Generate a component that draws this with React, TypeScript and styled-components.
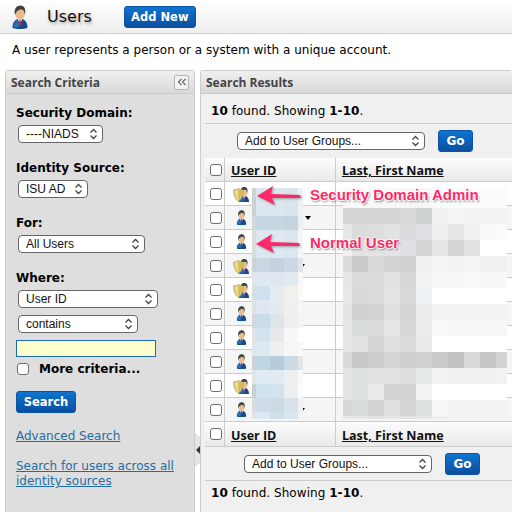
import React from "react";
import styled, { createGlobalStyle } from "styled-components";

const GlobalStyle = createGlobalStyle`
  html, body {
    margin: 0;
    height: 512px;
    overflow: hidden;
    background: #fff;
    color: #000;
    font-family: "DejaVu Sans", Verdana, sans-serif;
  }
`;

const chevrons = encodeURIComponent(
  `<svg xmlns="http://www.w3.org/2000/svg" width="9" height="12" viewBox="0 0 9 12"><path d="M1.5 4.5 4.5 1.5 7.5 4.5M1.5 7.5 4.5 10.5 7.5 7.5" fill="none" stroke="#444" stroke-width="1.3"/></svg>`
);

const Page = styled.div`
  width: 512px;
  height: 512px;
  overflow: hidden;
  display: flex;
  flex-direction: column;
`;

const Header = styled.header`
  height: 34px;
  flex: none;
  box-sizing: border-box;
  display: flex;
  align-items: center;
  padding-left: 12px;
  background: linear-gradient(#fff, #eeeeee);
  border-bottom: 1px solid #cfcfcf;
`;

const Title = styled.h1`
  margin: 0 32px 0 19px;
  font-size: 16px;
  font-weight: normal;
  color: #111;
  text-shadow: 1px 2px 3px rgba(0, 0, 0, 0.35);
`;

const BlueButton = styled.button<{ $w: number; $fs?: number; $mt?: number }>`
  display: block;
  width: ${({ $w }) => $w}px;
  height: 22px;
  padding: 0;
  margin-top: ${({ $mt }) => $mt ?? 0}px;
  border: 1px solid #0a55a5;
  border-radius: 3px;
  background: linear-gradient(#0f74cf, #0a4f9f);
  color: #fff;
  font-family: "DejaVu Sans", sans-serif;
  font-size: ${({ $fs }) => $fs ?? 12}px;
  font-weight: bold;
`;

const Description = styled.p`
  margin: 0;
  height: 36px;
  flex: none;
  padding: 8px 0 0 12px;
  box-sizing: border-box;
  font-size: 12px;
  line-height: 16px;
  letter-spacing: 0.03px;
`;

const Columns = styled.div`
  flex: 1;
  display: flex;
  gap: 5px;
  padding-left: 5px;
  min-height: 0;
`;

const Panel = styled.section<{ $bg: string }>`
  position: relative;
  box-sizing: border-box;
  border: 1px solid #cccccc;
  border-bottom: 0;
  border-radius: 3px 3px 0 0;
  background: ${({ $bg }) => $bg};
`;

const SidePanel = styled(Panel)`
  width: 190px;
  flex: none;
`;

const ResultsPanel = styled(Panel)`
  flex: 1;
  min-width: 0;
  border-right: 0;
`;

const PanelHead = styled.div`
  height: 23px;
  box-sizing: border-box;
  display: flex;
  align-items: center;
  justify-content: space-between;
  padding: 0 5px 0 5px;
  background: linear-gradient(#f0f0f0, #d9d9d9);
  border-bottom: 1px solid #cccccc;
  font-family: "Open Sans", sans-serif;
  font-size: 12px;
  font-weight: bold;
  color: #444;
`;

const CollapseButton = styled.div`
  width: 15px;
  height: 15px;
  box-sizing: border-box;
  border: 1px solid #b5b5b5;
  border-radius: 2px;
  background: #f2f2f2;
  display: flex;
  align-items: center;
  justify-content: center;
`;

const Criteria = styled.div`
  padding: 11px 0 0 10px;
`;

const FieldLabel = styled.div`
  font-size: 12px;
  font-weight: bold;
  line-height: 16px;
  margin-bottom: 4px;
`;

const Field = styled.div`
  height: 55px;
`;

const Select = styled.select<{ $w: number }>`
  display: block;
  appearance: none;
  width: ${({ $w }) => $w}px;
  height: 18px;
  margin: 0 0 7px 2px;
  padding: 0 0 0 7px;
  box-sizing: border-box;
  border: 1px solid #666;
  border-radius: 4px;
  background: #fff url("data:image/svg+xml,${chevrons}") no-repeat right 4px center;
  color: #111;
  font-family: "Liberation Sans", Arial, sans-serif;
  font-size: 12px;
`;

const TextInput = styled.input`
  display: block;
  width: 140px;
  height: 17px;
  box-sizing: border-box;
  border: 1px solid #1a6db5;
  background: #ffffcc;
  padding: 0;
`;

const Checkbox = styled.input.attrs({ type: "checkbox" })`
  appearance: none;
  flex: none;
  width: 12px;
  height: 12px;
  margin: 0;
  box-sizing: border-box;
  border: 1px solid #6f6f6f;
  border-radius: 3px;
  background: #fff;
`;

const MoreRow = styled.label`
  display: flex;
  align-items: center;
  gap: 10px;
  height: 16px;
  margin: 4px 0 0 1px;
  font-size: 12px;
  font-weight: bold;
`;

const SideLink = styled.a`
  display: block;
  color: #1f6da5;
  font-size: 12px;
  line-height: 15px;
  text-decoration: underline;
`;

const LinkList = styled.div`
  display: flex;
  flex-direction: column;
  gap: 15px;
  margin-top: 16px;
  width: 170px;
`;

const Handle = styled.div`
  position: absolute;
  right: -6px;
  top: 362px;
  width: 5px;
  height: 34px;
  background: #e4e4e4;
  clip-path: polygon(0 0, 100% 12%, 100% 88%, 0 100%);
  display: flex;
  align-items: center;
  justify-content: center;
`;

const Results = styled.div`
  padding-left: 4px;
`;

const FoundLine = styled.div<{ $top: number; $line?: "top" | "bottom" }>`
  height: 30px;
  box-sizing: border-box;
  padding: ${({ $top }) => $top}px 0 0 6px;
  font-size: 12px;
  line-height: 16px;
  letter-spacing: 0.05px;
  ${({ $line }) => $line && `border-${$line}: 1px solid #cccccc;`}
  b {
    font-weight: bold;
  }
`;

const Toolbar = styled.div<{ $pad: number; $h: number }>`
  height: ${({ $h }) => $h}px;
  box-sizing: border-box;
  display: flex;
  align-items: center;
  gap: 13px;
  padding-left: ${({ $pad }) => $pad}px;
  ${Select} {
    margin: 0;
  }
`;

const TableArea = styled.div`
  position: relative;
  margin-right: -2px;
`;

const TableRow = styled.div<{ $kind: "head" | "odd" | "even"; $h?: number }>`
  display: grid;
  grid-template-columns: 20px 111px 1fr;
  height: ${({ $h }) => $h ?? 24}px;
  box-sizing: border-box;
  border-bottom: 1px solid #cccccc;
  background: ${({ $kind }) =>
    $kind === "head"
      ? "linear-gradient(#fcfcfc, #e9e9e9)"
      : $kind === "even"
      ? "#f5f5f5"
      : "#ffffff"};
`;

const CheckCell = styled.div`
  display: flex;
  align-items: center;
  justify-content: center;
  padding-left: 3px;
  border-right: 1px solid #cccccc;
`;

const IdCell = styled.div`
  display: flex;
  align-items: center;
  padding-left: 6px;
  border-right: 1px solid #cccccc;
`;

const NameCell = styled.div`
  display: flex;
  align-items: center;
  padding-left: 6px;
`;

const SortLink = styled.a<{ $drop: number }>`
  padding: ${({ $drop }) => $drop}px 0 0 0;
  font-family: "Open Sans", sans-serif;
  font-size: 12.5px;
  font-weight: bold;
  color: #111;
  text-decoration: underline;
`;

const IconSlot = styled.span`
  width: 20px;
  display: flex;
  justify-content: center;
`;

const Caret = styled.span<{ $x: number }>`
  margin-left: ${({ $x }) => $x}px;
  width: 0;
  height: 0;
  border-left: 3.5px solid transparent;
  border-right: 3.5px solid transparent;
  border-top: 4px solid #000;
`;

const Mosaic = styled.div<{ $x: number; $y: number; $cols: string }>`
  position: absolute;
  left: ${({ $x }) => $x}px;
  top: ${({ $y }) => $y}px;
  display: grid;
  grid-template-columns: ${({ $cols }) => $cols};
`;

const Note = styled.span<{ $x: number; $y: number }>`
  position: absolute;
  left: ${({ $x }) => $x}px;
  top: ${({ $y }) => $y}px;
  font-family: "Liberation Sans", Arial, sans-serif;
  font-size: 15px;
  font-weight: bold;
  line-height: 18px;
  white-space: nowrap;
  color: #fb2a68;
  text-shadow: 0 0 1px #fff, 1px 0 1px #fff, -1px 0 1px #fff, 0 1px 1px #fff, 0 -1px 1px #fff,
    1px 2px 2px rgba(0, 0, 0, 0.45);
`;

const ArrowSvg = styled.svg<{ $x: number; $y: number }>`
  position: absolute;
  left: ${({ $x }) => $x}px;
  top: ${({ $y }) => $y}px;
  filter: drop-shadow(1px 1px 1px rgba(0, 0, 0, 0.3));
`;

const UserShape = () => (
  <>
    <path d="M1 46C1 36 5 30 11 28h10c6 2 10 8 10 18-8 3-22 3-30 0Z" fill="#174c8c" />
    <path d="M3 44c1-8 3-12 8-15l4 13-4 3c-3 0-6 0-8-1Z" fill="#2a6cb8" />
    <path d="M11 26h10l-5 14Z" fill="#f4f4f4" />
    <path d="M15 29h2l1.500 9-2.500 5-2.500-5Z" fill="#c8282e" />
    <ellipse cx="16" cy="16" rx="10" ry="13" fill="#e8bb8c" />
    <path d="M6 20C3 7 10 1 17 1c8 0 11 7 9 19-1-7-3-11-7-11-6 0-10 3-13 11Z" fill="#3b4347" />
  </>
);

const UserIcon = ({ w, h }: { w: number; h: number }) => (
  <svg width={w} height={h} viewBox="0 0 32 48">
    <UserShape />
  </svg>
);

const AdminIcon = () => (
  <svg width={16} height={16} viewBox="0 0 48 48">
    <g transform="translate(17 2)">
      <UserShape />
    </g>
    <path
      d="M2 12c6 0 11-2 14-5 3 3 8 5 14 5 0 15-3 26-14 34C5 38 2 27 2 12Z"
      fill="#ead985"
      stroke="#8f8f80"
      strokeWidth="2"
    />
    <path d="M16 7c3 3 8 5 14 5 0 15-3 26-14 34Z" fill="#d3bd52" />
  </svg>
);

const Arrow = ({ x, y }: { x: number; y: number }) => (
  <ArrowSvg $x={x} $y={y} width={50} height={24} viewBox="0 0 50 24">
    <path d="M0 12 16 2l-2 8 29 1 1 3-29 0 3 7Z" fill="#fb2a68" />
  </ArrowSvg>
);

const ID_COLS = "4px 14px 14px 14px 5px";
const ID_MOSAIC = [
  ["#c9d3d3", "#dbe6ef", "#dbe6ee", "#d9e4ed", "#eef1f3"],
  ["#c9d3d3", "#dbe6ef", "#dbe6ee", "#d9e4ed", "#eef1f3"],
  ["#d2d8d8", "#c5d6e2", "#c6d6e2", "#c4d5e1", "#f0f0f0"],
  ["#d8dede", "#dce7f0", "#dde8f0", "#dce6ee", "#f4f5f5"],
  ["#d8dede", "#dce7f0", "#dde8f0", "#dce6ee", "#f4f5f5"],
  ["#cdd4d8", "#c9d7e3", "#c3d2dc", "#ccd9e4", "#e2e6ea"],
  ["#dfe6e8", "#dfe9f1", "#dfe8f0", "#e2e9ef", "#f8f8f8"],
  ["#d8dde0", "#cfe0ee", "#e4ebf2", "#f3f0ec", "#fafafa"],
  ["#dde2e4", "#dde8f2", "#e3eaf0", "#efefef", "#f6f6f6"],
  ["#d3d9db", "#cbdde8", "#dde4ea", "#efeeec", "#f4f4f4"],
  ["#e0e4e6", "#d3e4f0", "#e6e8eb", "#f8f8f8", "#ffffff"],
  ["#e2e6e8", "#dceaf2", "#eeeff0", "#f6f6f6", "#f8f8f8"],
  ["#cdd3d4", "#c1d6e3", "#b4ccdc", "#cbdae4", "#e4e6e6"],
  ["#e2e6e8", "#e1ebf3", "#e2ebf2", "#ecf0f2", "#fafafa"],
  ["#c8d1cf", "#cfe2ed", "#d1e3ec", "#edf0f3", "#fbfbfb"],
  ["#d6dcde", "#cfdce8", "#cdd9e4", "#d8e2ea", "#f0f0f0"],
];
const ID_LAST = ["#e0e4e6", "#dce8f2", "#cfdfeb", "#dae5ee", "#f2f2f2"];

const NAME_COLS = "9px repeat(9, 16px) 11px";
const W = "#ffffff";
const NAME_FIRST = ["#f8f8f8", "#f8f8f8", "#f8f8f8", "#f8f8f8", "#f6f6f6", "#f6f6f6", "#fbfbfb", "#fbfbfb", "#fbfbfb", "#fbfbfb", "#fbfbfb"];
const NAME_MOSAIC = [
  ["#d6d6d4", "#d5d5d3", "#d5d5d3", "#d5d5d3", "#dbdad8", "#ced2d2", "#f1f1f1", "#f3f4f4", "#f3f3f3", "#f1f2f2", "#f3f3f3"],
  ["#e6e6e4", "#dadddc", "#dcdfdd", "#e2e2e2", "#d9dbdc", "#dee0e4", "#eef0f0", "#e6e8e8", "#f1f1ef", "#f8f9f9", "#fbfbfb"],
  ["#f2f2f2", "#e4e4e4", "#e3e3e3", "#e4e4e8", "#dfe0e6", "#d6d6d8", "#e6e6e6", "#d6d7d5", "#e2e2e2", W, W],
  ["#dcdcdc", "#c9cacb", "#dadada", "#d2d2d0", "#d0d2d0", "#eff1f3", "#f3f4f6", "#f2f4f4", "#f3f4f4", "#eff0f0", "#f0f0f0"],
  ["#e6e6e6", "#dcdcdc", "#dcdcdc", "#e2e2e2", "#d8d8d8", "#f1f3f4", "#f6f8f8", "#f7f9f9", "#f8f9f9", "#f7f8f8", "#f7f8f8"],
  ["#eae9ea", "#d8d9d8", "#dcdcdc", "#e4e4e4", "#d9d9d9", "#eff2f4", W, W, W, W, W],
  ["#e3e4e4", "#d0d0d0", "#d2d2d2", "#e0e0e0", "#d6d6d6", "#ecedee", "#f3f3f3", "#f3f3f3", "#f3f3f3", "#f3f3f3", "#f3f3f3"],
  ["#e5e5e2", "#d8dddb", "#dcdcdc", "#e6e6e6", "#d8d8d8", "#eceeee", "#f9f9f9", "#f8f8f8", "#f8f8f8", "#f7f7f7", "#f7f7f7"],
  ["#e6e6e4", "#dfe2e0", "#d2d5d3", "#e0e0e0", "#dcdcdc", "#ebebeb", W, W, W, W, W],
  ["#dadad8", "#c9c9c9", "#cdcdcd", "#d6d6d6", "#cfcfcf", "#d1d1d1", "#cbcbcb", "#c1c1c1", "#d8dad8", "#c6c6c6", "#d2d3d5"],
  ["#e6e4e2", "#dce2e0", "#e2e2e2", "#e2e2e2", "#dedede", "#e6eaea", "#f2f2f2", "#f0f0f0", "#f0f0f0", "#f0f0f0", "#f2f2f2"],
  ["#e6e4e2", "#dce0de", "#eaeaea", "#d2d2d2", "#d2d2d2", "#f2f2f2", W, W, W, W, W],
  ["#d8d8d6", "#d8dcda", "#d2d2d2", "#e0e0e0", "#d4d4d2", "#dce0df", "#f8f8f8", "#f2f2f2", "#f2f2f2", "#f2f2f2", "#f2f2f2"],
];
const NAME_LAST = ["#e8e8e8", "#e6e6e6", "#e2e2e2", "#e6e6e6", "#e4e4e4", "#e6e6e6", "#eeeeee", "#f5f5f5", "#f5f5f5", "#f5f5f5", "#f5f5f5"];

const USERS: { admin?: boolean; caret?: number }[] = [
  { admin: true },
  { caret: 54 },
  {},
  { admin: true, caret: 48 },
  { admin: true },
  {},
  {},
  { caret: 45 },
  { admin: true },
  { caret: 48 },
];

const HeadRow = ({ h, drop }: { h?: number; drop: number }) => (
  <TableRow $kind="head" $h={h}>
    <CheckCell>
      <Checkbox />
    </CheckCell>
    <IdCell>
      <SortLink $drop={drop}>User ID</SortLink>
    </IdCell>
    <NameCell>
      <SortLink $drop={drop}>Last, First Name</SortLink>
    </NameCell>
  </TableRow>
);

const GroupSelect = () => (
  <>
    <Select $w={188} defaultValue="add">
      <option value="add">Add to User Groups...</option>
    </Select>
    <BlueButton $w={35}>Go</BlueButton>
  </>
);

const Cells = ({ rows, h }: { rows: string[][]; h: number }) => (
  <>
    {rows.flatMap((row, r) =>
      row.map((color, c) => (
        <div key={`${r}-${c}`} style={{ background: color, height: h }} />
      ))
    )}
  </>
);

const App = () => (
  <Page>
    <GlobalStyle />
    <Header>
      <UserIcon w={16} h={24} />
      <Title>Users</Title>
      <BlueButton $w={72} $fs={11.5}>Add New</BlueButton>
    </Header>
    <Description>A user represents a person or a system with a unique account.</Description>
    <Columns>
      <SidePanel $bg="#dedede">
        <PanelHead>
          Search Criteria
          <CollapseButton>
            <svg width="10" height="8" viewBox="0 0 10 8">
              <path d="M4.500 1 1.500 4l3 3M8.500 1l-3 3 3 3" fill="none" stroke="#666" strokeWidth="1.200" />
            </svg>
          </CollapseButton>
        </PanelHead>
        <Criteria>
          <Field>
            <FieldLabel>Security Domain:</FieldLabel>
            <Select $w={85} defaultValue="niads">
              <option value="niads">----NIADS</option>
            </Select>
          </Field>
          <Field>
            <FieldLabel>Identity Source:</FieldLabel>
            <Select $w={70} defaultValue="isu">
              <option value="isu">ISU AD</option>
            </Select>
          </Field>
          <Field>
            <FieldLabel>For:</FieldLabel>
            <Select $w={127} defaultValue="all">
              <option value="all">All Users</option>
            </Select>
          </Field>
          <FieldLabel>Where:</FieldLabel>
          <Select $w={140} defaultValue="id">
            <option value="id">User ID</option>
          </Select>
          <Select $w={120} defaultValue="contains">
            <option value="contains">contains</option>
          </Select>
          <TextInput />
          <MoreRow>
            <Checkbox />
            More criteria...
          </MoreRow>
          <BlueButton $w={60} $fs={11.5} $mt={14}>
            Search
          </BlueButton>
          <LinkList>
            <SideLink>Advanced Search</SideLink>
            <SideLink>Search for users across all identity sources</SideLink>
          </LinkList>
        </Criteria>
        <Handle>
          <svg width="4" height="8" viewBox="0 0 4 8">
            <path d="M4 0v8L0 4Z" fill="#333" />
          </svg>
        </Handle>
      </SidePanel>
      <ResultsPanel $bg="#f0f0f0">
        <PanelHead>Search Results</PanelHead>
        <Results>
          <FoundLine $top={9} $line="bottom">
            <b>10</b> found. Showing <b>1-10</b>.
          </FoundLine>
          <Toolbar $pad={32} $h={34}>
            <GroupSelect />
          </Toolbar>
          <TableArea>
            <HeadRow drop={2} />
            {USERS.map((user, i) => (
              <TableRow key={i} $kind={i % 2 ? "even" : "odd"}>
                <CheckCell>
                  <Checkbox />
                </CheckCell>
                <IdCell>
                  <IconSlot>{user.admin ? <AdminIcon /> : <UserIcon w={11} h={15} />}</IconSlot>
                  {user.caret !== undefined && <Caret $x={user.caret} />}
                </IdCell>
                <NameCell />
              </TableRow>
            ))}
            <HeadRow h={25} drop={3} />
            <Mosaic $x={47} $y={30} $cols={ID_COLS}>
              <Cells rows={ID_MOSAIC} h={14} />
              <Cells rows={[ID_LAST]} h={7} />
            </Mosaic>
            <Mosaic $x={138} $y={30} $cols={NAME_COLS}>
              <Cells rows={[NAME_FIRST]} h={20} />
              <Cells rows={NAME_MOSAIC} h={16} />
              <Cells rows={[NAME_LAST]} h={3} />
            </Mosaic>
            <Arrow x={52} y={26} />
            <Arrow x={51} y={74} />
            <Note $x={105} $y={28}>Security Domain Admin</Note>
            <Note $x={105} $y={76}>Normal User</Note>
          </TableArea>
          <Toolbar $pad={39} $h={33}>
            <GroupSelect />
          </Toolbar>
          <FoundLine $top={4} $line="top">
            <b>10</b> found. Showing <b>1-10</b>.
          </FoundLine>
        </Results>
      </ResultsPanel>
    </Columns>
  </Page>
);

export default App;
